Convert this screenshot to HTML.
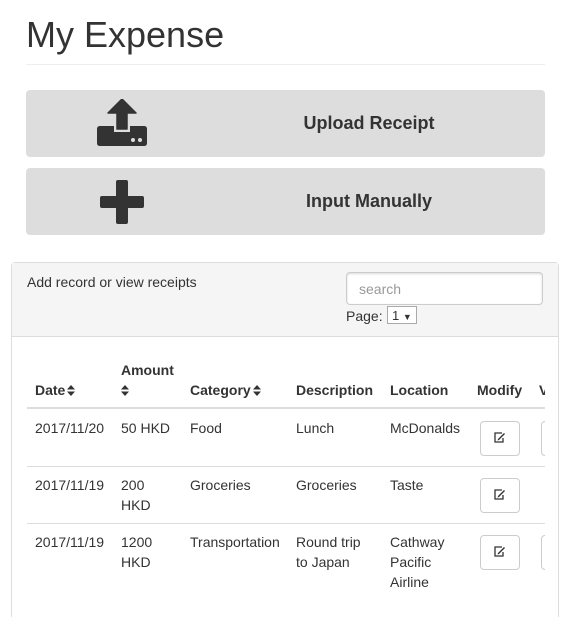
<!DOCTYPE html>
<html style="overflow:hidden;height:617px"><head><style>
body{margin:0;width:573px;height:617px;overflow:hidden;background:#fff;font-family:"Liberation Sans",Arial,sans-serif;color:#333;position:relative}
.a{position:absolute}
.btn{position:absolute;left:26px;width:519px;height:67px;background:#ddd;border-radius:4px}
.btn span{position:absolute;left:0;right:0;text-align:center;padding-left:167px;top:23px;font-size:18px;font-weight:bold;color:#333}
.t{font-size:14px;line-height:20px;position:absolute}
.h{font-weight:bold}
.eb{position:absolute;width:38px;height:33px;border:1px solid #ccc;border-radius:4px;background:#fff}
.s{display:inline-block;vertical-align:-1px;margin-left:2px}
</style></head><body>
<div class="a" style="left:26px;top:14px;font-size:36px;color:#333">My Expense</div>
<div class="a" style="left:26px;top:64px;width:519px;height:1px;background:#eee"></div>
<div class="btn" style="top:90px">
<svg class="a" style="left:70px;top:9px" width="52" height="48" viewBox="0 0 52 48"><path d="M26 0 L40 14 L31 14 L31 30 L21 30 L21 14 L12 14 Z" fill="#333" stroke="#333" stroke-linejoin="round" stroke-width="1.5"/><path d="M4 27 H18 V33 H34 V27 H48 Q51 27 51 30 V44 Q51 47 48 47 H4 Q1 47 1 44 V30 Q1 27 4 27 Z" fill="#333"/><circle cx="37" cy="41" r="2" fill="#ddd"/><circle cx="44" cy="41" r="2" fill="#ddd"/></svg>
<span>Upload Receipt</span></div>
<div class="btn" style="top:168px">
<svg class="a" style="left:74px;top:12px" width="44" height="44" viewBox="0 0 44 44"><rect x="16" y="0" width="12" height="44" rx="2" fill="#333"/><rect x="0" y="16" width="44" height="12" rx="2" fill="#333"/></svg>
<span>Input Manually</span></div>
<div class="a" style="left:11px;top:262px;width:546px;height:354px;border:1px solid #ddd;border-bottom:none;border-radius:4px 4px 0 0"></div>
<div class="a" style="left:12px;top:263px;width:546px;height:73px;background:#f5f5f5;border-bottom:1px solid #ddd"></div>
<div class="t" style="left:27px;top:272px">Add record or view receipts</div>
<div class="a" style="left:346px;top:272px;width:195px;height:31px;border:1px solid #ccc;border-radius:4px;background:#fff;box-shadow:inset 0 1px 2px rgba(0,0,0,.15)"></div>
<div class="t" style="left:359px;top:279px;color:#999">search</div>
<div class="t" style="left:346px;top:306px">Page:</div>
<div class="a" style="left:387px;top:306px;width:30px;height:18px;border:1px solid #aaa;background:#fff;font-size:13px;line-height:18px;padding-left:4px;box-sizing:border-box">1 <span style="font-size:9px">▼</span></div>
<div style="position:absolute;left:27px;top:336px;width:518px;height:281px;overflow:hidden">
<div style="position:absolute;left:-27px;top:-336px;width:600px;height:617px">
<div class="t h" style="left:121px;top:360px">Amount</div>
<div class="t h" style="left:35px;top:380px">Date<svg class="s" width="8" height="11" viewBox="0 0 8 11"><path d="M0 4.5L4 0L8 4.5ZM0 6.5L4 11L8 6.5Z" fill="#333"/></svg></div>
<div class="t h" style="left:121px;top:380px"><svg class="s" style="margin:0" width="8" height="11" viewBox="0 0 8 11"><path d="M0 4.5L4 0L8 4.5ZM0 6.5L4 11L8 6.5Z" fill="#333"/></svg></div>
<div class="t h" style="left:190px;top:380px">Category<svg class="s" width="8" height="11" viewBox="0 0 8 11"><path d="M0 4.5L4 0L8 4.5ZM0 6.5L4 11L8 6.5Z" fill="#333"/></svg></div>
<div class="t h" style="left:296px;top:380px">Description</div>
<div class="t h" style="left:390px;top:380px">Location</div>
<div class="t h" style="left:477px;top:380px">Modify</div>
<div class="t h" style="left:539px;top:380px">View</div>
<div class="a" style="left:27px;top:407px;width:530px;height:2px;background:#ddd"></div>
<div class="t" style="left:35px;top:418px">2017/11/20</div><div class="t" style="left:121px;top:418px">50 HKD</div><div class="t" style="left:190px;top:418px">Food</div><div class="t" style="left:296px;top:418px">Lunch</div><div class="t" style="left:390px;top:418px">McDonalds</div>
<div class="eb" style="left:480px;top:421px"></div><div class="eb" style="left:541px;top:421px"></div>
<div class="a" style="left:27px;top:466px;width:530px;height:1px;background:#ddd"></div>
<div class="t" style="left:35px;top:475px">2017/11/19</div><div class="t" style="left:121px;top:475px">200<br>HKD</div><div class="t" style="left:190px;top:475px">Groceries</div><div class="t" style="left:296px;top:475px">Groceries</div><div class="t" style="left:390px;top:475px">Taste</div>
<div class="eb" style="left:480px;top:478px"></div>
<div class="a" style="left:27px;top:523px;width:530px;height:1px;background:#ddd"></div>
<div class="t" style="left:35px;top:532px">2017/11/19</div><div class="t" style="left:121px;top:532px">1200<br>HKD</div><div class="t" style="left:190px;top:532px">Transportation</div><div class="t" style="left:296px;top:532px">Round trip<br>to Japan</div><div class="t" style="left:390px;top:532px">Cathway<br>Pacific<br>Airline</div>
<div class="eb" style="left:480px;top:535px"></div><div class="eb" style="left:541px;top:535px"></div>
</div></div>
<svg class="a" style="left:494px;top:432px" width="12" height="11" viewBox="0 0 12 11"><path d="M8 1H1V10H9V6" fill="none" stroke="#333" stroke-width="1.3"/><path d="M4 7L10 1L11 2L5 8L3.5 8.5Z" fill="#333"/></svg>
<svg class="a" style="left:494px;top:489px" width="12" height="11" viewBox="0 0 12 11"><path d="M8 1H1V10H9V6" fill="none" stroke="#333" stroke-width="1.3"/><path d="M4 7L10 1L11 2L5 8L3.5 8.5Z" fill="#333"/></svg>
<svg class="a" style="left:494px;top:546px" width="12" height="11" viewBox="0 0 12 11"><path d="M8 1H1V10H9V6" fill="none" stroke="#333" stroke-width="1.3"/><path d="M4 7L10 1L11 2L5 8L3.5 8.5Z" fill="#333"/></svg>
</body></html>
